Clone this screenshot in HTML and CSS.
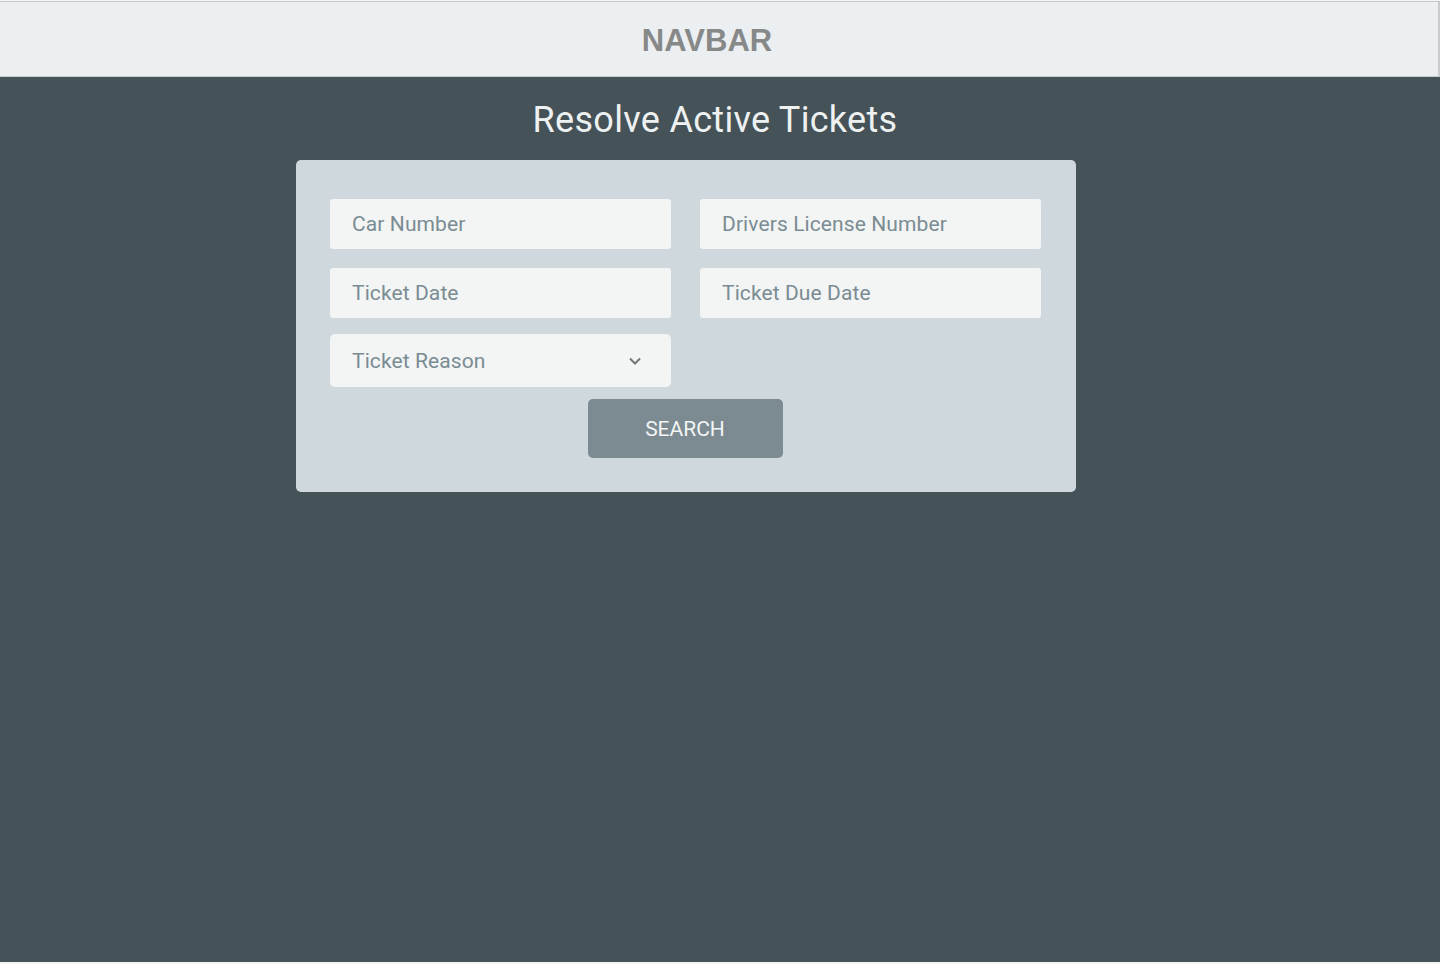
FILE: index.html
```html
<!DOCTYPE html>
<html>
<head>
<meta charset="utf-8">
<link rel="stylesheet" href="styles.css">
</head>
<body>
<div class="frame">
  <header class="navbar"><span class="brand">NAVBAR</span></header>
  <main class="main">
    <h1 class="title">Resolve Active Tickets</h1>
    <form class="card">
      <div class="grid">
        <div class="field">Car Number</div>
        <div class="field">Drivers License Number</div>
        <div class="field">Ticket Date</div>
        <div class="field">Ticket Due Date</div>
        <div class="field select">
          <span>Ticket Reason</span>
          <svg class="chev" width="14" height="10" viewBox="0 0 14 10"><path d="M2 2.5 L7 7.5 L12 2.5" fill="none" stroke="#757575" stroke-width="2"/></svg>
        </div>
      </div>
      <div class="actions"><button type="button" class="btn">SEARCH</button></div>
    </form>
  </main>
</div>
</body>
</html>
```
FILE: styles.css
```css
html, body { margin: 0; padding: 0; }
body { background: #f4f5f5; font-family: Roboto, "Noto Sans", sans-serif; }
.frame { height: 962px; display: flex; flex-direction: column; }
.navbar {
  margin-top: 1px;
  background: #eceff1;
  border-top: 1px solid #c4c6c7;
  border-right: 2px solid #c9cbcc;
  border-bottom: 1px solid #c9cccd;
  display: flex; align-items: center; justify-content: center;
  box-sizing: border-box;
  height: 76px;
}
.brand { font-family: "Liberation Sans", Arial, sans-serif; font-weight: 700; font-size: 31px; color: #878888; margin-left: -24px; margin-top: 4px; }
.main { flex: 1; background: #455257; display: flex; flex-direction: column; }
.title { margin: 22px 0 0 0; text-align: center; font-weight: 400; font-size: 36px; color: #eef1f1; letter-spacing: 0.3px; margin-left: -10px; }
.card {
  margin: 19px 0 0 296px; width: 780px; box-sizing: border-box;
  background: #cfd8dd; border-radius: 5px;
  padding: 39px 35px 34px 34px;
}
.grid { display: grid; grid-template-columns: 341px 341px; column-gap: 29px; row-gap: 19px; }
.field {
  height: 50px; background: #f3f4f4; border-radius: 3px;
  display: flex; align-items: center; padding: 0 22px; box-sizing: border-box;
  font-size: 21px; color: #7a8c93; letter-spacing: 0.1px;
}
.select { height: 53px; border-radius: 5px; justify-content: space-between; margin-top: -3px; }
.chev { margin-right: 7px; }
.actions { display: flex; justify-content: center; margin-top: 12px; padding-right: 2px; }
.btn {
  width: 195px; height: 59px; border: none; border-radius: 5px;
  background: #7b8b91; color: #f3f5f6; font-family: Roboto, sans-serif; font-size: 21px;
  padding: 0; margin-left: 1px;
}
```
